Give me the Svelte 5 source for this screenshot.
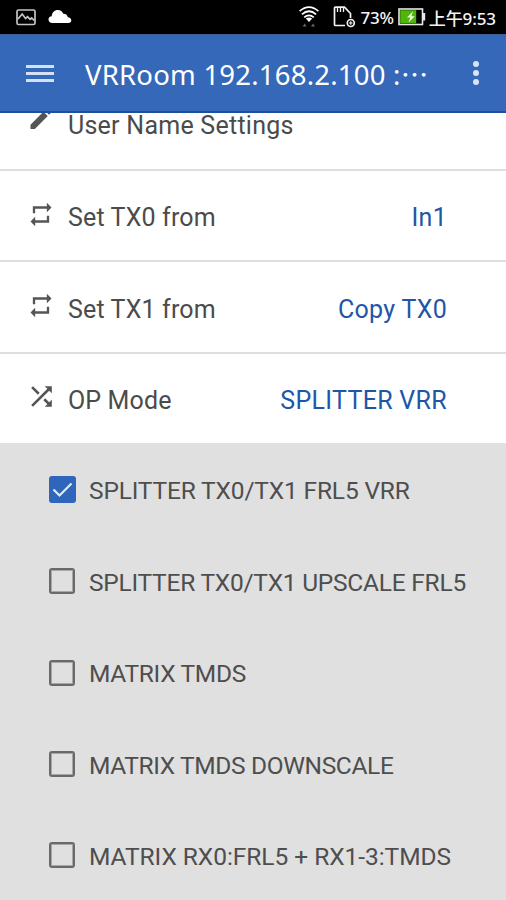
<script lang="ts">
  type Icon = 'repeat' | 'shuffle';

  interface Setting {
    icon: Icon;
    label: string;
    value: string;
  }

  const settings: Setting[] = [
    { icon: 'repeat', label: 'Set TX0 from', value: 'In1' },
    { icon: 'repeat', label: 'Set TX1 from', value: 'Copy TX0' },
    { icon: 'shuffle', label: 'OP Mode', value: 'SPLITTER VRR' },
  ];

  const iconPath: Record<Icon, string> = {
    repeat: 'M7 7h10v3l4-4-4-4v3H5v6h2V7zm10 10H7v-3l-4 4 4 4v-3h12v-6h-2v4z',
    shuffle: 'M10.59 9.17L5.41 4 4 5.41l5.17 5.17 1.42-1.41zM14.5 4l2.04 2.04L4 18.59 5.41 20 17.96 7.46 20 9.5V4h-5.5zm.33 9.41l-1.41 1.41 3.13 3.13L14.5 20H20v-5.5l-2.04 2.04-3.13-3.13z',
  };

  const modes = [
    { name: 'SPLITTER TX0/TX1 FRL5 VRR', tracking: -0.16 },
    { name: 'SPLITTER TX0/TX1 UPSCALE FRL5', tracking: -0.24 },
    { name: 'MATRIX TMDS', tracking: -0.3 },
    { name: 'MATRIX TMDS DOWNSCALE', tracking: -0.36 },
    { name: 'MATRIX RX0:FRL5 + RX1-3:TMDS', tracking: -0.04 },
  ];

  let selected = $state(0);
</script>

<div class="screen">
  <div class="status-bar">
    <svg class="picture" width="20" height="17" viewBox="0 0 20 17" fill="none" stroke="#c4c4c4" stroke-width="1.7">
      <rect x="1" y="1" width="18" height="14.5" rx="1.5" />
      <path d="M2 10l4.2-5 3.4 4.4 2-1.8 2.4 2.8 1.6-1.4 2.6 2.4" />
    </svg>
    <svg class="cloud" width="24" height="15" viewBox="0 0 24 15">
      <path fill="#fff" d="M4.5 14C2 14 .5 12.6 .5 10.6 .5 8.7 1.7 7.5 3.7 7.3 4 3.3 6.4 1 9.8 1c2.7 0 4.6 1.4 5.5 3.7 2.5-.2 4.2 1.3 4.5 3.6 2.2 .2 3.5 1.4 3.5 3 0 1.7-1.2 2.7-3 2.7z" />
    </svg>
    <span class="spacer"></span>
    <svg class="wifi" width="20" height="22" viewBox="0 0 20 22" fill="none" stroke="#fff" stroke-width="1.7">
      <path d="M.6 5.2Q10-2.8 19.4 5.2M2.9 8.3Q10 2.2 17.1 8.3M5.2 11.3Q10 7.4 14.8 11.3" />
      <path d="M6.8 12.5Q10 10.6 13.2 12.5L10 16z" fill="#fff" stroke="none" />
      <path d="M3.6 20.5h4L5.6 17.500zM12 20.500h4l-2-3z" fill="#666" stroke="none" />
    </svg>
    <svg class="card" width="23" height="22" viewBox="0 0 23 22" fill="none" stroke="#f2f2f2" stroke-width="1.7">
      <path d="M12 19.5H2.5Q1.5 19.5 1.5 18.5V2.2Q1.5 1.2 2.5 1.2H11.5L17.5 7.5V12" />
      <path d="M4.5 2v4M7.5 2v4M10.5 2v4" stroke-width="1.3" />
      <circle cx="17.8" cy="17" r="3.5" />
      <path d="M16 17h3.6M17.8 15.2v3.6" stroke-width="1.2" />
    </svg>
    <span class="percent">73%</span>
    <svg class="battery" width="28" height="18" viewBox="0 0 28 18">
      <rect x="1" y="1" width="23.5" height="15.5" fill="#000" stroke="#e8e8e8" stroke-width="1.6" />
      <rect x="2.2" y="2.2" width="16" height="13.1" fill="#4eb60a" />
      <rect x="25" y="5" width="2.2" height="7.5" fill="#e8e8e8" />
      <path d="M15 3.2L9 9.5h3.3L10.5 14.5l6.3-6.3h-3.4z" fill="#eaffdc" />
    </svg>
    <span class="time">上午9:53</span>
  </div>

  <header>
    <button class="menu" aria-label="Menu"><i></i><i></i><i></i></button>
    <h1>VRRoom 192.168.2.100 :<span lang="zh-TW">…</span></h1>
    <button class="more" aria-label="More"><i></i><i></i><i></i></button>
  </header>

  <main>
    <div class="row clipped">
      <svg class="icon pencil" viewBox="0 0 24 24">
        <path d="M3 17.25V21h3.75L17.81 9.94l-3.75-3.75L3 17.25zM20.71 7.04a1 1 0 0 0 0-1.41l-2.34-2.34a1 1 0 0 0-1.41 0l-1.83 1.83 3.75 3.75 1.83-1.83z" />
      </svg>
      <span class="label">User Name Settings</span>
    </div>

    {#each settings as item}
      <div class="row">
        <svg class="icon {item.icon}" viewBox="0 0 24 24"><path d={iconPath[item.icon]} /></svg>
        <span class="label">{item.label}</span>
        <span class="value">{item.value}</span>
      </div>
    {/each}

    <div class="modes">
      {#each modes as mode, i}
        <button class="mode" onclick={() => selected = i}>
          <span class="box" class:checked={selected === i}>
            {#if selected === i}
              <svg width="27" height="27" viewBox="0 0 27 27" fill="none" stroke="#e4efe2" stroke-width="2.2">
                <path d="M4.5 13.5l6 6L22.5 7.5" />
              </svg>
            {/if}
          </span>
          <span class="name" style="letter-spacing: {mode.tracking}px">{mode.name}</span>
        </button>
      {/each}
    </div>
  </main>
</div>

<style>
  :global(body) {
    margin: 0;
    background: #e0e0e0;
  }

  .screen {
    width: 506px;
    height: 900px;
    overflow: hidden;
    display: flex;
    flex-direction: column;
    font-family: Roboto, "Noto Sans", sans-serif;
    background: #e0e0e0;
  }

  button {
    border: none;
    background: none;
    padding: 0;
    margin: 0;
    font: inherit;
    color: inherit;
  }

  .status-bar {
    flex: none;
    height: 34px;
    box-sizing: border-box;
    padding: 0 10px 0 16px;
    display: flex;
    align-items: center;
    background: #000;
    color: #f4f4f4;
    font-family: "Noto Sans", "Noto Sans CJK TC", sans-serif;
    font-size: 17px;
    font-weight: 500;
    white-space: nowrap;
  }

  .cloud {
    margin-left: 12px;
    margin-top: -1px;
  }

  .spacer {
    flex: 1;
  }

  .card {
    margin-left: 14px;
  }

  .percent {
    margin-left: 4px;
    letter-spacing: -0.2px;
  }

  .battery {
    margin-left: 4px;
  }

  .time {
    margin-left: 3px;
    letter-spacing: -0.1px;
  }

  header {
    flex: none;
    height: 79px;
    box-sizing: border-box;
    border-top: 1px solid #3a5f96;
    border-bottom: 2px solid #1c4f9f;
    padding: 0 27px 0 26px;
    display: flex;
    align-items: center;
    background: #3568b9;
    color: #fff;
  }

  .menu {
    width: 28px;
    display: grid;
    gap: 4px;
  }

  .menu i {
    height: 3px;
    background: #d3e0f8;
  }

  h1 {
    flex: 1;
    margin: 2px 0 0 31px;
    font: 400 27.5px/36px "Noto Sans", sans-serif;
    letter-spacing: 0.22px;
    white-space: nowrap;
  }

  h1 span {
    font-family: "Noto Sans CJK TC", sans-serif;
  }

  .more {
    display: grid;
    gap: 3px;
  }

  .more i {
    width: 6px;
    height: 6px;
    border-radius: 50%;
    background: #d8e4f8;
  }

  main {
    flex: none;
    overflow: hidden;
  }

  .row {
    height: 91.4px;
    box-sizing: border-box;
    border-top: 2px solid #dedede;
    padding: 0 59px 0 27px;
    display: flex;
    align-items: center;
    font-size: 25px;
    letter-spacing: 0.15px;
    color: #4b4b4b;
    background: #fff;
    white-space: nowrap;
  }

  .label,
  .value {
    margin-top: 4px;
  }

  .clipped {
    height: 56px;
    border: none;
    align-items: flex-start;
  }

  .clipped .label {
    margin-top: 0;
    line-height: 26px;
    letter-spacing: 0.25px;
  }

  .icon {
    flex: none;
    width: 28px;
    height: 29px;
    margin-right: 13px;
    margin-top: -3px;
    fill: #555;
  }

  .shuffle {
    width: 31px;
    height: 31px;
    margin-left: -1px;
    margin-right: 11px;
  }

  .pencil {
    margin-top: -9px;
  }

  .value {
    margin-left: auto;
    letter-spacing: 0.3px;
    color: #1e56a8;
  }

  .modes {
    background: #e0e0e0;
  }

  .mode {
    width: 100%;
    height: 91.4px;
    padding: 2px 0 0 49px;
    display: flex;
    align-items: center;
    gap: 14px;
    font-size: 24.5px;
    color: #4e4e4e;
    white-space: nowrap;
  }

  .name {
    margin-top: 2px;
  }

  .box {
    flex: none;
    width: 26px;
    height: 26px;
    box-sizing: border-box;
    border: 2px solid #6a6a6a;
    border-radius: 3px;
    box-shadow: inset 0 0 0 1px #a6a6a6;
  }

  .box.checked {
    width: 27px;
    height: 27px;
    margin-right: -1px;
    border: none;
    background: #2f65bb;
    box-shadow: none;
  }

  .box svg {
    display: block;
  }
</style>
